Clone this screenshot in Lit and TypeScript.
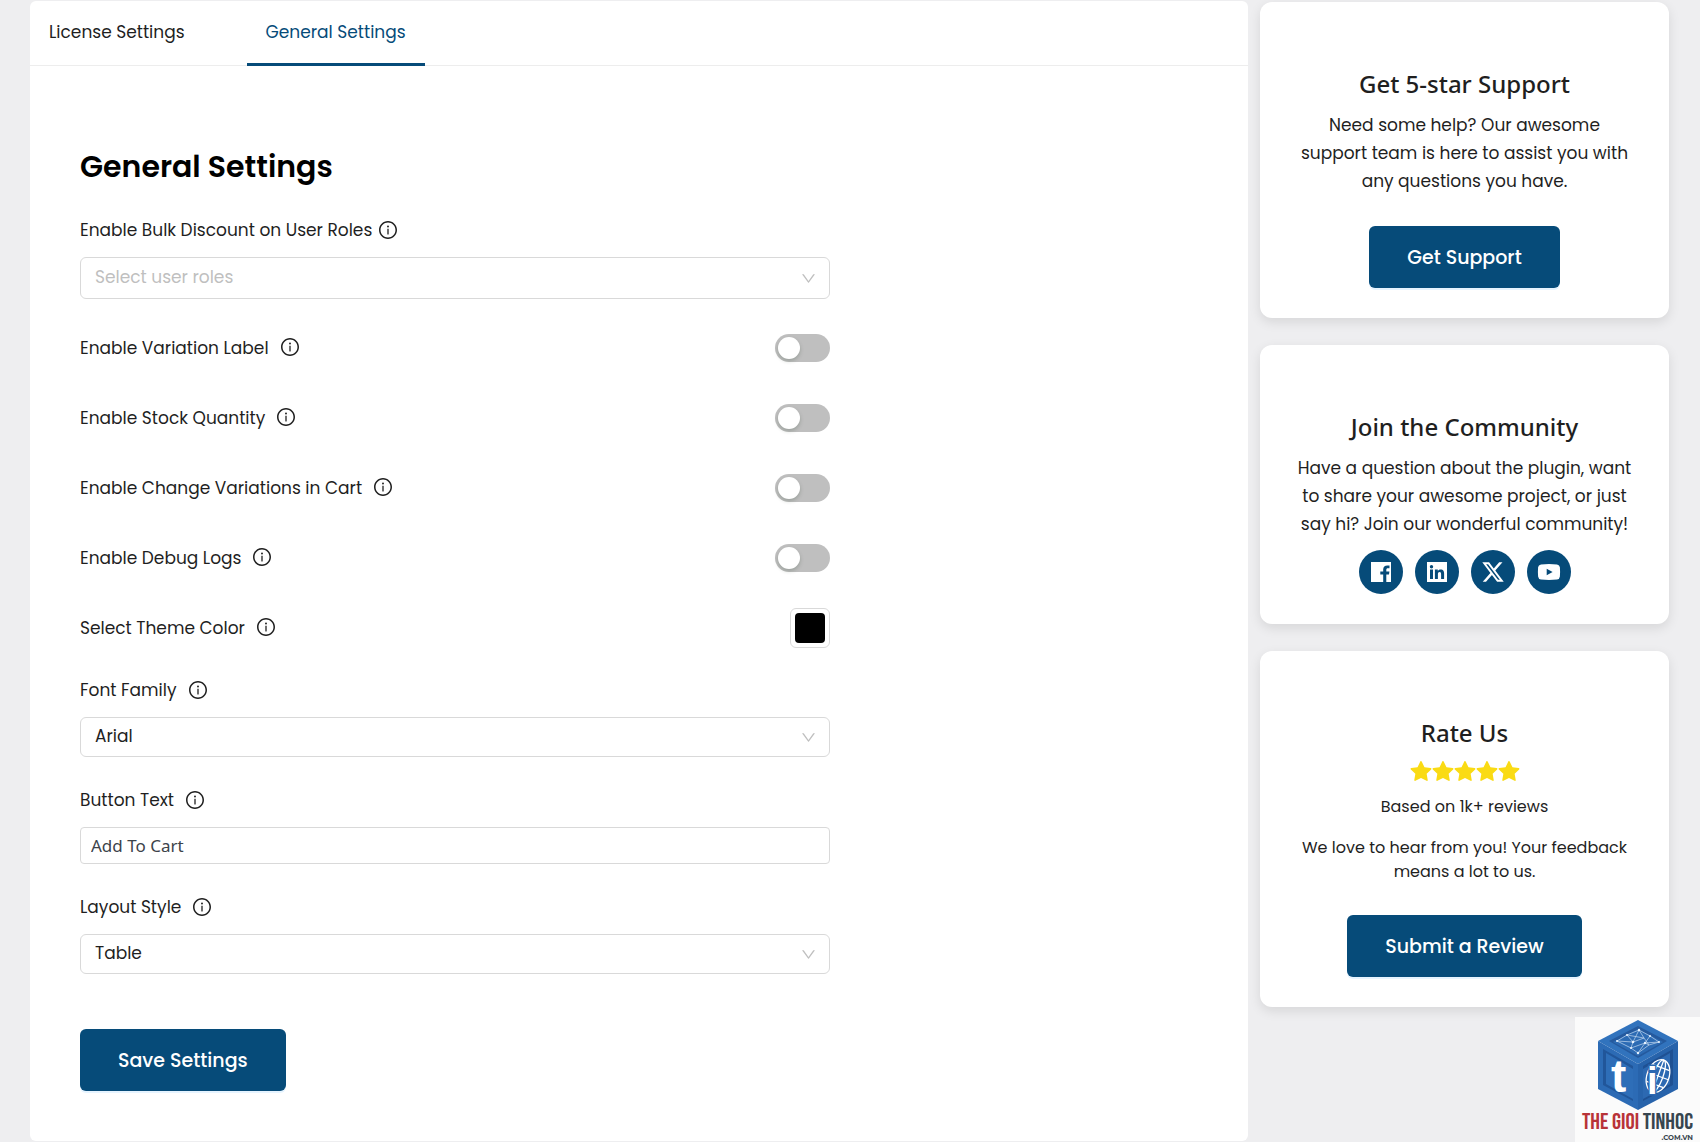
import { LitElement, html, css, svg } from "lit";
import { customElement, property, state } from "lit/decorators.js";
import { classMap } from "lit/directives/class-map.js";

const infoIcon = html`<svg class="info" viewBox="64 64 896 896" role="img" aria-label="More information">
  <path d="M512 64C264.6 64 64 264.6 64 512s200.6 448 448 448 448-200.6 448-448S759.4 64 512 64zm0 820c-205.4 0-372-166.6-372-372s166.6-372 372-372 372 166.6 372 372-166.6 372-372 372z" />
  <path d="M464 336a48 48 0 1096 0 48 48 0 10-96 0zm72 112h-48c-4.4 0-8 3.6-8 8v272c0 4.4 3.6 8 8 8h48c4.4 0 8-3.6 8-8V456c0-4.4-3.6-8-8-8z" />
</svg>`;

const downIcon = html`<svg class="chevron" viewBox="64 64 896 896" aria-hidden="true">
  <path d="M884 256h-75c-5.1 0-9.9 2.5-12.9 6.6L512 654.2 227.9 262.6c-3-4.1-7.8-6.6-12.9-6.6h-75c-6.5 0-10.3 7.4-6.5 12.7l352.6 486.1c12.8 17.6 39 17.6 51.7 0l352.6-486.1c3.9-5.3.1-12.7-6.4-12.7z" />
</svg>`;

const starIcon = html`<svg class="star" viewBox="64 64 896 896" aria-hidden="true">
  <path d="M908.1 353.1l-253.9-36.9L540.7 86.1c-3.1-6.3-8.2-11.4-14.5-14.5-15.8-7.8-35-1.3-42.9 14.5L369.8 316.2l-253.9 36.9c-7 1-13.4 4.3-18.3 9.3a32.05 32.05 0 00.6 45.3l183.7 179.1-43.4 252.9a31.95 31.95 0 0046.4 33.7L512 754l227.1 119.4c6.2 3.3 13.4 4.4 20.3 3.2 17.4-3 29.1-19.5 26.1-36.9l-43.4-252.9 183.7-179.1c5-4.9 8.3-11.3 9.3-18.3 2.7-17.5-9.5-33.7-27-36.3z" />
</svg>`;

const socialLinks = [
  {
    name: "Facebook",
    icon: svg`<path fill-rule="evenodd" d="M2 2h20v20h-4.700v-7.500h2.700l.4-3h-3.100V9.700c0-.9.4-1.500 1.600-1.500h1.600V5.500c-.5-.1-1.300-.1-2.200-.1-2.500 0-4.100 1.400-4.100 4v2.100H11.300v3h2.900V22H2z"/>`,
  },
  {
    name: "LinkedIn",
    icon: svg`<path fill-rule="evenodd" d="M2 2h20v20H2zM5 9.600V19h3V9.600zM6.500 5a1.700 1.700 0 1 0 0 3.400 1.700 1.700 0 0 0 0-3.400zM9.900 9.600V19h3v-4.700c0-1.300.3-2.400 1.700-2.400s1.500 1.300 1.500 2.500V19h3v-5.200c0-2.500-.6-4.400-3.500-4.400-1.400 0-2.400.7-2.800 1.500V9.600z"/>`,
  },
  {
    name: "X",
    icon: svg`<g transform="translate(1.300 1.300) scale(1.340)"><path d="M12.6.75h2.454l-5.36 6.142L16 15.25h-4.937l-3.867-5.07-4.425 5.07H.316l5.733-6.57L0 .75h5.063l3.495 4.633L12.601.75Zm-.86 13.028h1.36L4.323 2.145H2.865z"/></g>`,
  },
  {
    name: "YouTube",
    icon: svg`<path fill-rule="evenodd" d="M4 4.400Q12 3.600 20 4.400Q22.600 4.700 22.900 7.300Q23.300 12 22.900 16.600Q22.600 19.300 20 19.600Q12 20.400 4 19.600Q1.400 19.300 1.100 16.600Q.7 12 1.100 7.300Q1.400 4.700 4 4.400zM9.700 8.700v6.600L15.600 12z"/>`,
  },
];

@customElement("info-label")
class InfoLabel extends LitElement {
  @property() text = "";
  @property({ type: Boolean, reflect: true }) tight = false;

  static styles = css`
    :host {
      display: flex;
      align-items: center;
      gap: 12px;
      line-height: 27px;
    }
    :host([tight]) {
      gap: 7px;
    }
    .info {
      width: 18px;
      height: 18px;
      margin-bottom: 2px;
      fill: currentColor;
      flex: none;
    }
  `;

  render() {
    return html`<span>${this.text}</span>${infoIcon}`;
  }
}

@customElement("side-card")
class SideCard extends LitElement {
  @property() heading = "";

  static styles = css`
    :host {
      display: flex;
      flex-direction: column;
      align-items: center;
      padding: 66px 35px 30px;
      border-radius: 12px;
      background: #fff;
      box-shadow: 0 4px 12px rgba(0, 0, 0, 0.1);
      text-align: center;
    }
    .title {
      margin: 0;
      font: 500 24px/32px "Segoe UI", "Noto Sans", "Open Sans", sans-serif;
    }
  `;

  render() {
    return html`<h2 class="title">${this.heading}</h2><slot></slot>`;
  }
}

@customElement("site-badge")
class SiteBadge extends LitElement {
  static styles = css`
    :host {
      display: flex;
      flex-direction: column;
      align-items: center;
      box-sizing: border-box;
      width: 125px;
      height: 125px;
      padding-top: 2px;
      background: #fbfbfb;
    }
    .cube {
      width: 82px;
      height: 92px;
      flex: none;
    }
    .letter {
      fill: #fff;
      font: 700 46px "Liberation Sans", sans-serif;
    }
    .letter.small {
      stroke: #2c69b2;
      stroke-width: 3px;
      paint-order: stroke;
      font-size: 38px;
    }
    .name {
      color: #b83338;
      font: 400 23px/23px "Bebas Neue", "Liberation Sans Narrow", "Liberation Sans", sans-serif;
      white-space: nowrap;
    }
    .second {
      color: #37454f;
    }
    .domain {
      align-self: flex-end;
      margin-right: 7px;
      color: #37454f;
      font: 700 7px/8px Montserrat, Lato, sans-serif;
    }
  `;

  render() {
    return html`
      <svg class="cube" viewBox="0 0 82 92" aria-hidden="true">
        <path fill="#3173bd" d="M41 1 81 22 41 45 1 22z" />
        <path fill="#2c6bb5" d="M1 22 41 45V91L1 70z" />
        <path fill="#2763ab" d="M81 22 41 45V91L81 70z" />
        <path fill="#255a9e" d="M41 7 70 22 41 39 12 22z" />
        <path fill="#2c6bb4" d="M41 10 66 23 41 37 16 23z" />
        <path fill="#21569a" d="M6 30 36 47V82L6 66z" />
        <path fill="#2e6eb8" d="M9 34 36 50V80L9 65z" />
        <path fill="#1f5193" d="M76 30 46 47V82L76 66z" />
        <path fill="#2c69b2" d="M73 34 46 50V80L73 65z" />
        <g fill="none" stroke="#c3d9ef" stroke-width=".7">
          <path d="M20 22 30 16 42 11 53 17 62 23 52 26 41 34 34 29 20 22 36 23 30 16 47 19 42 11 36 23 34 29 48 24 41 34M53 17 48 24 62 23M36 23 47 19 52 26 48 24" />
        </g>
        <g fill="#e8f3ff">
          <circle cx="42" cy="11" r="1.200" /><circle cx="30" cy="16" r="1" /><circle cx="53" cy="17" r="1" />
          <circle cx="36" cy="23" r="1.300" /><circle cx="48" cy="24" r="1.200" /><circle cx="62" cy="23" r="1" />
          <circle cx="34" cy="29" r="1" /><circle cx="20" cy="22" r="1" /><circle cx="41" cy="34" r="1.200" />
        </g>
        <g fill="none" stroke="#fff" stroke-width="1.300" transform="rotate(20 61 57)">
          <ellipse cx="61" cy="57" rx="11" ry="17" />
          <ellipse cx="61" cy="57" rx="5" ry="17" />
          <path d="M61 40V74M50 57H72M52 48H70M52 66H70" />
        </g>
        <text class="letter" x="14" y="73">t</text>
        <text class="letter small" x="50" y="75">i</text>
      </svg>
      <span class="name">THE GIOI <span class="second">TINHOC</span></span>
      <span class="domain">.COM.VN</span>
    `;
  }
}

@customElement("app-root")
class AppRoot extends LitElement {
  @state() private activeTab = "General Settings";

  private tabs = ["License Settings", "General Settings"];
  private toggles = [
    "Enable Variation Label",
    "Enable Stock Quantity",
    "Enable Change Variations in Cart",
    "Enable Debug Logs",
  ];

  static styles = css`
    :host {
      display: block;
      position: relative;
      min-height: 100vh;
      background: #eeeef0;
      color: #1f1f1f;
      font: 400 17px/27px Poppins, Inter, sans-serif;
    }
    * {
      box-sizing: border-box;
    }
    .page {
      display: grid;
      grid-template-columns: minmax(0, 1fr) 409px;
      gap: 12px;
      min-height: 100vh;
      padding: 1px 31px 1px 30px;
    }
    .panel {
      border-radius: 6px;
      background: #fff;
    }
    .tabs {
      display: flex;
      gap: 43px;
      height: 65px;
      border-bottom: 1px solid #ededed;
    }
    .tab {
      height: 65px;
      padding: 0 19px;
      border: 0;
      border-bottom: 3px solid transparent;
      background: none;
      color: inherit;
      font: inherit;
      cursor: pointer;
    }
    .tab.active {
      border-bottom-color: #064b79;
      color: #064b79;
    }
    .form {
      display: flex;
      flex-direction: column;
      max-width: 850px;
      padding: 81px 50px 48px;
    }
    .heading {
      margin: 0 0 30px;
      color: #000;
      font-size: 30px;
      font-weight: 600;
      line-height: 40px;
    }
    .label {
      display: block;
    }
    .field {
      display: flex;
      flex-direction: column;
      align-items: flex-start;
      gap: 13px;
    }
    .row {
      display: flex;
      align-items: center;
      justify-content: space-between;
      height: 70px;
    }
    .switches {
      padding: 14px 0;
    }
    .stack {
      display: flex;
      flex-direction: column;
      gap: 30px;
    }
    .select-box {
      display: grid;
      grid-template-columns: 1fr 44px;
      align-items: center;
      width: 100%;
    }
    .select {
      grid-area: 1 / 1 / 2 / 3;
      width: 100%;
      height: 40px;
      padding: 0 44px 2px 14px;
      border: 1px solid #d9d9d9;
      border-radius: 6px;
      appearance: none;
      background: #fff;
      color: inherit;
      font: inherit;
    }
    .select.empty {
      height: 42px;
      color: #bfbfbf;
    }
    .chevron {
      grid-area: 1 / 2;
      justify-self: end;
      width: 15px;
      height: 15px;
      margin-right: 14px;
      fill: #bfbfbf;
      pointer-events: none;
    }
    .text-input {
      width: 100%;
      height: 37px;
      padding: 0 10px;
      border: 1px solid #d9d9d9;
      border-radius: 4px;
      background: #fff;
      color: #3c434a;
      font: 400 17px/27px "Segoe UI", "Noto Sans", "Open Sans", sans-serif;
    }
    .switch {
      display: flex;
      align-items: center;
      width: 55px;
      height: 28px;
      margin: 0;
      padding: 3px;
      border-radius: 14px;
      appearance: none;
      background: #bfbfbf;
      cursor: pointer;
    }
    .switch::before {
      content: "";
      width: 22px;
      height: 22px;
      border-radius: 50%;
      background: #fff;
      box-shadow: 0 2px 4px rgba(0, 35, 11, 0.2);
    }
    .switch:checked {
      justify-content: flex-end;
      background: #064b79;
    }
    .swatch {
      width: 40px;
      height: 40px;
      padding: 4px;
      border: 1px solid #d9d9d9;
      border-radius: 6px;
      appearance: none;
      background: #fff;
    }
    .swatch::-webkit-color-swatch-wrapper {
      padding: 0;
    }
    .swatch::-webkit-color-swatch {
      border: 0;
      border-radius: 4px;
    }
    .button {
      height: 62px;
      padding: 0 38px;
      border: 0;
      border-radius: 6px;
      background: #064b79;
      box-shadow: 0 2px 0 rgba(5, 145, 255, 0.1);
      color: #fff;
      font: inherit;
      font-size: 19px;
      font-weight: 500;
      cursor: pointer;
    }
    .save {
      align-self: flex-start;
      margin-top: 55px;
    }
    .sidebar {
      display: flex;
      flex-direction: column;
      gap: 27px;
      padding-top: 1px;
    }
    .copy {
      margin: 11px 0 0;
      line-height: 28px;
    }
    .small {
      margin-top: 12px;
      font-size: 16px;
      line-height: 24px;
    }
    .gap-above {
      margin-top: 17px;
    }
    .action {
      margin-top: 31px;
    }
    .socials {
      display: flex;
      gap: 12px;
      margin-top: 12px;
    }
    .social {
      display: flex;
      align-items: center;
      justify-content: center;
      width: 44px;
      height: 44px;
      border-radius: 50%;
      background: #064b79;
    }
    .social-icon {
      width: 24px;
      height: 24px;
      fill: #fff;
    }
    .stars {
      display: flex;
      margin-top: 12px;
    }
    .star {
      width: 22px;
      height: 22px;
      fill: #fadb14;
    }
    .badge {
      position: absolute;
      right: 0;
      bottom: 0;
    }
  `;

  private renderSelect(id: string, label: string, options: string[]) {
    return html`<div class="field">
      <label class="label" for=${id}><info-label text=${label}></info-label></label>
      <div class="select-box">
        <select class="select" id=${id}>
          ${options.map((option) => html`<option>${option}</option>`)}
        </select>
        ${downIcon}
      </div>
    </div>`;
  }

  render() {
    return html`
      <div class="page">
        <main class="panel">
          <nav class="tabs">
            ${this.tabs.map(
              (tab) => html`<button
                class=${classMap({ tab: true, active: tab === this.activeTab })}
                @click=${() => (this.activeTab = tab)}
              >${tab}</button>`,
            )}
          </nav>
          <form class="form" @submit=${(event: Event) => event.preventDefault()}>
            <h1 class="heading">General Settings</h1>
            <div class="field">
              <label class="label" for="roles"><info-label tight text="Enable Bulk Discount on User Roles"></info-label></label>
              <div class="select-box">
                <select class="select empty" id="roles">
                  <option>Select user roles</option>
                </select>
                ${downIcon}
              </div>
            </div>
            <div class="switches">
              ${this.toggles.map(
                (label, index) => html`<div class="row">
                  <label class="label" for="toggle-${index}"><info-label text=${label}></info-label></label>
                  <input class="switch" id="toggle-${index}" type="checkbox" role="switch" />
                </div>`,
              )}
              <div class="row">
                <label class="label" for="theme"><info-label text="Select Theme Color"></info-label></label>
                <input class="swatch" id="theme" type="color" value="#000000" />
              </div>
            </div>
            <div class="stack">
              ${this.renderSelect("font", "Font Family", ["Arial"])}
              <div class="field">
                <label class="label" for="button-text"><info-label text="Button Text"></info-label></label>
                <input class="text-input" id="button-text" type="text" value="Add To Cart" />
              </div>
              ${this.renderSelect("layout", "Layout Style", ["Table"])}
            </div>
            <button class="button save">Save Settings</button>
          </form>
        </main>
        <aside class="sidebar">
          <side-card heading="Get 5-star Support">
            <p class="copy">Need some help? Our awesome support team is here to assist you with any questions you have.</p>
            <button class="button action">Get Support</button>
          </side-card>
          <side-card heading="Join the Community">
            <p class="copy">Have a question about the plugin, want to share your awesome project, or just say hi? Join our wonderful community!</p>
            <div class="socials">
              ${socialLinks.map(
                (link) => html`<a class="social" href="#" aria-label=${link.name}>
                  <svg class="social-icon" viewBox="0 0 24 24">${link.icon}</svg>
                </a>`,
              )}
            </div>
          </side-card>
          <side-card heading="Rate Us">
            <div class="stars" role="img" aria-label="Five stars">${[0, 1, 2, 3, 4].map(() => starIcon)}</div>
            <p class="copy small">Based on 1k+ reviews</p>
            <p class="copy small gap-above">We love to hear from you! Your feedback means a lot to us.</p>
            <button class="button action">Submit a Review</button>
          </side-card>
        </aside>
      </div>
      <site-badge class="badge"></site-badge>
    `;
  }
}
